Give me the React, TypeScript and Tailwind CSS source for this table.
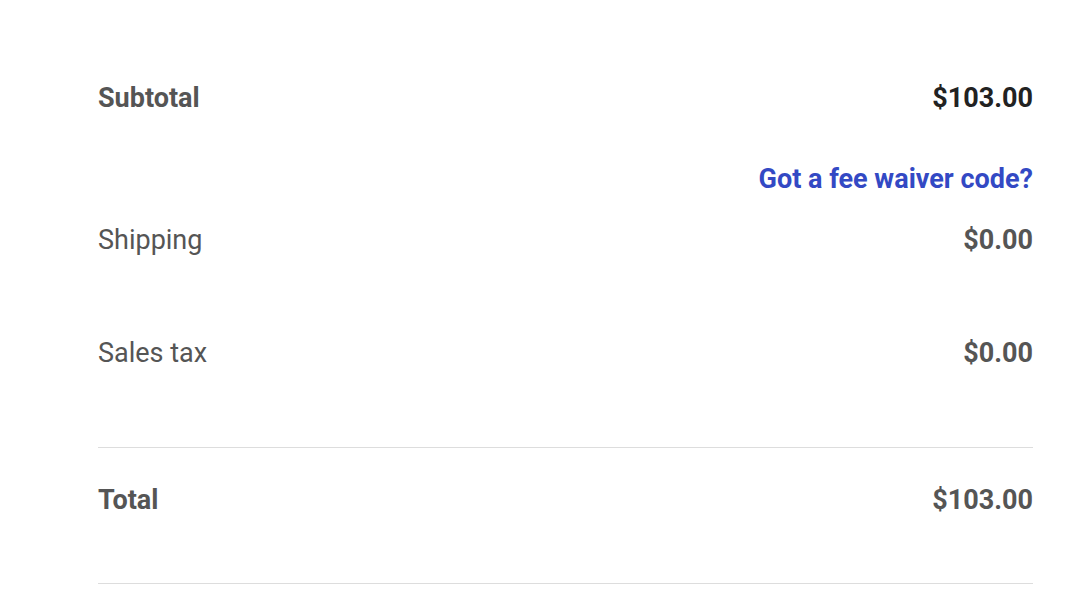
import React from "react";

const App: React.FC = () => {
  return (
    <div className="w-full min-h-screen bg-white font-['Roboto',sans-serif] text-[27px] leading-8">
      <div className="pl-[98px] pr-[47px] pt-[82px]">
        {/* SUBTOTAL */}
        <div className="flex justify-between h-8 items-center">
          <span className="font-bold text-[#555555]">Subtotal</span>
          <span className="font-bold text-[#222222]">$103.00</span>
        </div>

        <div className="flex justify-end mt-[49px]">
          <a href="#" className="font-bold text-[#3349c4]">Got a fee waiver code?</a>
        </div>

        {/* SHIPPING */}
        <div className="flex justify-between h-8 items-center mt-[29px]">
          <span className="text-[#555555]">Shipping</span>
          <span className="font-bold text-[#555555]">$0.00</span>
        </div>

        {/* TAX */}
        <div className="flex justify-between h-8 items-center mt-[81px]">
          <span className="text-[#555555]">Sales tax</span>
          <span className="font-bold text-[#555555]">$0.00</span>
        </div>

        <div className="border-t border-[#dddddd] mt-[78px]" />

        {/* TOTAL */}
        <div className="flex justify-between h-8 items-center mt-[36px]">
          <span className="font-bold text-[#555555]">Total</span>
          <span className="font-bold text-[#555555]">$103.00</span>
        </div>

        <div className="border-t border-[#dddddd] mt-[67px]" />
      </div>
    </div>
  );
};

export default App;
